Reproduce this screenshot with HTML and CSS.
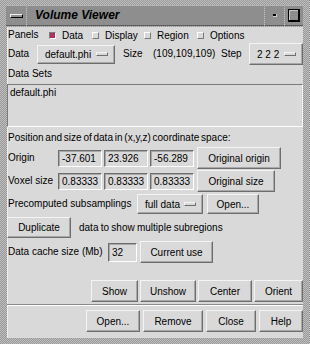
FILE: index.html
```html
<!DOCTYPE html>
<html>
<head>
<meta charset="utf-8">
<link rel="stylesheet" href="styles.css">
</head>
<body>
<div class="window">
  <div class="titlebar">
    <div class="tb-btn tb-menu"><span class="menu-bar"></span></div>
    <div class="tb-title">Volume Viewer</div>
    <div class="tb-btn tb-min"><span class="min-dot"></span></div>
    <div class="tb-btn tb-max"><span class="max-box"></span></div>
  </div>
  <div class="content">
    <div class="row r-panels">
      <span class="lbl panels-lbl">Panels</span>
      <span class="cb w-data"><span class="ind on"></span>Data</span>
      <span class="cb w-display"><span class="ind"></span>Display</span>
      <span class="cb w-region"><span class="ind"></span>Region</span>
      <span class="cb"><span class="ind"></span>Options</span>
    </div>
    <div class="row r-data">
      <span class="lbl data-lbl">Data</span>
      <span class="mbtn mb-data">default.phi<span class="mind"></span></span>
      <span class="lbl size-lbl">Size</span>
      <span class="lbl size-val">(109,109,109)</span>
      <span class="lbl step-lbl">Step</span>
      <span class="mbtn mb-step">2 2 2<span class="mind"></span></span>
    </div>
    <div class="row r-sets"><span class="lbl">Data Sets</span></div>
    <div class="listbox"><div class="li">default.phi</div></div>
    <div class="row r-pos"><span class="lbl">Position and size of data in (x,y,z) coordinate space:</span></div>
    <div class="row r-origin">
      <span class="lbl coord-lbl">Origin</span>
      <span class="entry e-coord">-37.601</span>
      <span class="entry e-coord">23.926</span>
      <span class="entry e-coord">-56.289</span>
      <span class="btn b-origin">Original origin</span>
    </div>
    <div class="row r-voxel">
      <span class="lbl coord-lbl">Voxel size</span>
      <span class="entry e-coord">0.83333</span>
      <span class="entry e-coord">0.83333</span>
      <span class="entry e-coord">0.83333</span>
      <span class="btn b-size">Original size</span>
    </div>
    <div class="row r-sub">
      <span class="lbl sub-lbl">Precomputed subsamplings</span>
      <span class="mbtn mb-full">full data<span class="mind"></span></span>
      <span class="btn b-open">Open...</span>
    </div>
    <div class="row r-dup">
      <span class="btn b-dup">Duplicate</span>
      <span class="lbl dup-lbl">data to show multiple subregions</span>
    </div>
    <div class="row r-cache">
      <span class="lbl cache-lbl">Data cache size (Mb)</span>
      <span class="entry e-cache">32</span>
      <span class="btn b-cur">Current use</span>
    </div>
    <div class="spacer"></div>
    <div class="row r-show">
      <span class="btn b-show">Show</span>
      <span class="btn b-unshow">Unshow</span>
      <span class="btn b-center">Center</span>
      <span class="btn b-orient">Orient</span>
    </div>
    <div class="sep"></div>
    <div class="row r-bottom">
      <span class="btn b-bopen">Open...</span>
      <span class="btn b-remove">Remove</span>
      <span class="btn b-close">Close</span>
      <span class="btn b-help">Help</span>
    </div>
  </div>
</div>
</body>
</html>
```
FILE: styles.css
```css
* { box-sizing: border-box; }
html, body { margin: 0; padding: 0; }
body {
  width: 310px;
  height: 344px;
  overflow: hidden;
  font-family: "Liberation Sans", Arial, sans-serif;
  font-size: 10px;
  color: #000;
}
.window {
  width: 310px;
  height: 344px;
  padding: 5px 7px 6px 7px;
  display: flex;
  flex-direction: column;
  background: repeating-conic-gradient(#9a9a9a 0 25%, #bdbdbd 0 50%) 0 0 / 2px 2px;
}
.titlebar {
  height: 21px;
  display: flex;
  margin: 0 0 1px -1px;
}
.tb-btn {
  background: #8e8e8e;
  display: flex;
  align-items: center;
  justify-content: center;
  border-top: 1px solid #b4b4b4;
  border-bottom: 1px solid #5c5c5c;
}
.tb-menu { width: 20px; margin-right: 1px; }
.menu-bar {
  width: 13px;
  height: 4px;
  background: #8e8e8e;
  border-top: 1px solid #f2f2f2;
  border-left: 1px solid #f2f2f2;
  border-bottom: 1px solid #000;
  border-right: 1px solid #000;
}
.tb-title {
  flex: 1;
  background: #8e8e8e;
  border-top: 1px solid #b4b4b4;
  border-bottom: 1px solid #5c5c5c;
  font-weight: bold;
  font-style: italic;
  font-size: 12px;
  line-height: 19px;
  padding-left: 8px;
  margin-right: 1px;
}
.tb-min { width: 19px; margin-right: 1px; }
.min-dot { width: 4px; height: 3px; background: #000; border: 1px solid #d0d0d0; border-width: 0 1px 1px 0; }
.tb-max { width: 18px; }
.max-box {
  width: 12px;
  height: 13px;
  border: 1px solid #000;
  border-right-width: 2px;
  border-bottom-width: 2px;
  box-shadow: inset 1px 1px 0 #c8c8c8;
}
.content {
  flex: 1;
  background: #d9d9d9;
  display: flex;
  flex-direction: column;
  border-left: 1px solid #eeeeee;
}
.row {
  display: flex;
  align-items: center;
  white-space: nowrap;
}
.lbl { line-height: 12px; }
.r-panels { height: 14px; margin-top: 1px; }
.panels-lbl { width: 41px; }
.cb { display: flex; align-items: center; }
.w-data { width: 43px; }
.w-display { width: 52px; }
.w-region { width: 53px; }
.ind {
  width: 7px;
  height: 7px;
  margin-right: 6px;
  background: #d9d9d9;
  border: 1px solid;
  border-color: #ffffff #7a7a7a #7a7a7a #ffffff;
}
.ind.on {
  background: #b03060;
  border-color: #7a7a7a #ffffff #ffffff #7a7a7a;
}
.r-data { height: 22px; margin-top: 1px; }
.data-lbl { width: 29px; }
.mbtn {
  display: flex;
  align-items: center;
  justify-content: space-between;
  height: 19px;
  padding: 0 6px 0 7px;
  border: 1px solid;
  border-color: #f4f4f4 #6e6e6e #6e6e6e #f4f4f4;
  box-shadow: inset -1px -1px 0 #a8a8a8;
}
.mind {
  width: 12px;
  height: 4px;
  border: 1px solid;
  border-color: #f4f4f4 #6e6e6e #6e6e6e #f4f4f4;
}
.mb-data { width: 78px; }
.size-lbl { margin-left: 8px; width: 30px; }
.size-val { width: 68px; }
.step-lbl { width: 28px; }
.mb-step { width: 54px; height: 22px; }
.r-sets { height: 12px; margin-top: 3px; }
.listbox {
  height: 43px;
  margin-top: 4px;
  margin-left: -1px;
  border: 1px solid;
  border-color: #7a7a7a #ffffff #ffffff #7a7a7a;
  padding: 2px 2px;
}
.li { line-height: 12px; }
.r-pos { height: 12px; margin-top: 5px; word-spacing: -1px; }
.r-origin { height: 22px; margin-top: 3px; }
.r-voxel { height: 22px; margin-top: 1px; }
.coord-lbl { width: 50px; }
.entry {
  height: 17px;
  line-height: 15px;
  padding-left: 3px;
  border: 1px solid;
  border-color: #6e6e6e #ffffff #ffffff #6e6e6e;
  box-shadow: inset 1px 1px 0 #a8a8a8;
}
.e-coord { width: 44px; margin-right: 2px; }
.btn {
  display: flex;
  align-items: center;
  justify-content: center;
  height: 21px;
  border: 1px solid;
  border-color: #f4f4f4 #6e6e6e #6e6e6e #f4f4f4;
  box-shadow: inset -1px -1px 0 #a8a8a8;
}
.b-origin { width: 84px; margin-left: 1px; height: 22px; }
.b-size { width: 78px; margin-left: 1px; height: 22px; }
.r-sub { height: 20px; margin-top: 2px; }
.sub-lbl { width: 129px; }
.mb-full { width: 66px; height: 20px; }
.b-open { width: 52px; margin-left: 4px; height: 20px; }
.r-dup { height: 21px; margin-top: 3px; margin-left: -1px; }
.b-dup { width: 64px; }
.dup-lbl { margin-left: 8px; word-spacing: -0.5px; }
.r-cache { height: 22px; margin-top: 3px; }
.cache-lbl { width: 100px; }
.e-cache { width: 29px; height: 19px; line-height: 17px; }
.b-cur { width: 73px; margin-left: 3px; height: 22px; }
.spacer { flex: 1; }
.r-show { height: 22px; justify-content: flex-end; gap: 2px; }
.b-show { width: 47px; height: 22px; }
.b-unshow { width: 56px; height: 22px; }
.b-center { width: 54px; height: 22px; }
.b-orient { width: 49px; height: 22px; }
.sep {
  height: 2px;
  margin: 2px 0 4px -1px;
  border-top: 1px solid #8a8a8a;
  border-bottom: 1px solid #ffffff;
}
.r-bottom { height: 22px; justify-content: flex-end; gap: 3px; margin-bottom: 6px; }
.b-bopen { width: 54px; height: 22px; }
.b-remove { width: 60px; height: 22px; }
.b-close { width: 50px; height: 22px; }
.b-help { width: 44px; height: 22px; }
```
